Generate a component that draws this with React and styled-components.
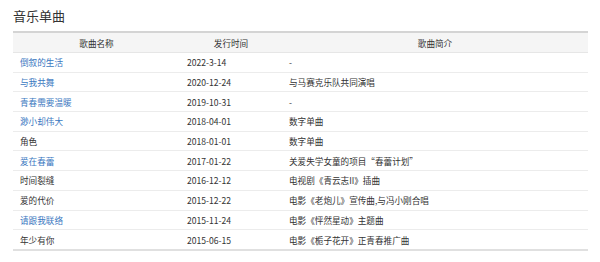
import React from "react";
import styled, { createGlobalStyle } from "styled-components";

const Global = createGlobalStyle`
  html, body { margin: 0; padding: 0; background: #fff; }
  body { font-family: "Noto Sans CJK SC", "Noto Sans", sans-serif; color: #333; }
`;

const Page = styled.div`
  padding: 6px 12px 0 13px;
  width: 575px;
`;

const Title = styled.h2`
  margin: 0 0 6px 0;
  font-size: 13px;
  font-weight: 400;
  line-height: 19px;
  color: #333;
`;

const Table = styled.table`
  width: 575px;
  border-collapse: collapse;
  table-layout: fixed;
  font-size: 8.6px;
  border-top: 2px solid #d4d4d4;
  border-bottom: 2px solid #e0e0e0;
`;

const Th = styled.th`
  background: #f5f5f5;
  font-weight: 400;
  color: #333;
  text-align: center;
  height: 19px;
  padding: 0;
  border-bottom: 1px solid #e6e6e6;
  width: ${(p) => p.$w}px;
`;

const Td = styled.td`
  height: 18.7px;
  padding: 0 0 0 7px;
  border-top: 1px solid #ececec;
  color: #333;
  white-space: nowrap;
`;

const Link = styled.a`
  color: #3a78bf;
  text-decoration: none;
`;

const rows = [
  ["倒叙的生活", true, "2022-3-14", "-"],
  ["与我共舞", true, "2020-12-24", "与马赛克乐队共同演唱"],
  ["青春需要温暖", true, "2019-10-31", "-"],
  ["渺小却伟大", true, "2018-04-01", "数字单曲"],
  ["角色", false, "2018-01-01", "数字单曲"],
  ["爱在春蕾", true, "2017-01-22", "关爱失学女童的项目“春蕾计划”"],
  ["时间裂缝", false, "2016-12-12", "电视剧《青云志II》插曲"],
  ["爱的代价", false, "2015-12-22", "电影《老炮儿》宣传曲,与冯小刚合唱"],
  ["请跟我联络", true, "2015-11-24", "电影《怦然星动》主题曲"],
  ["年少有你", false, "2015-06-15", "电影《栀子花开》正青春推广曲"],
];

export default function App() {
  return (
    <>
      <Global />
      <Page>
        <Title>音乐单曲</Title>
        <Table>
          <thead>
            <tr>
              <Th $w={167}>歌曲名称</Th>
              <Th $w={102}>发行时间</Th>
              <Th $w={306}>歌曲简介</Th>
            </tr>
          </thead>
          <tbody>
            {rows.map(([name, link, date, desc]) => (
              <tr key={name}>
                <Td>{link ? <Link href="#">{name}</Link> : name}</Td>
                <Td>{date}</Td>
                <Td>{desc}</Td>
              </tr>
            ))}
          </tbody>
        </Table>
      </Page>
    </>
  );
}
